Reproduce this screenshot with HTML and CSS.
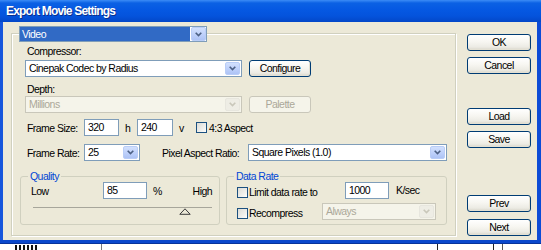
FILE: index.html
```html
<!DOCTYPE html>
<html>
<head>
<meta charset="utf-8">
<title>Export Movie Settings</title>
<link rel="stylesheet" href="styles.css">
</head>
<body>
<div class="window">
  <div class="titlebar"><span class="title">Export Movie Settings</span></div>
  <div class="client">
    <div class="panel">
      <div class="select select-head">
        <span class="select-value">Video</span>
        <span class="arrow"><svg width="7" height="5" viewBox="0 0 7 5"><path d="M0.7 0.7 L3.5 3.6 L6.3 0.7" fill="none" stroke="#4d6185" stroke-width="1.6"/></svg></span>
      </div>
      <div class="label">Compressor:</div>
      <div class="row">
        <div class="select w-comp">
          <span class="select-value">Cinepak Codec by Radius</span>
          <span class="arrow"><svg width="7" height="5" viewBox="0 0 7 5"><path d="M0.7 0.7 L3.5 3.6 L6.3 0.7" fill="none" stroke="#4d6185" stroke-width="1.6"/></svg></span>
        </div>
        <button class="btn btn-side">Configure</button>
      </div>
      <div class="label label-depth">Depth:</div>
      <div class="row row-depth">
        <div class="select w-comp disabled">
          <span class="select-value">Millions</span>
          <span class="arrow"><svg width="7" height="5" viewBox="0 0 7 5"><path d="M0.7 0.7 L3.5 3.6 L6.3 0.7" fill="none" stroke="#c9c7ba" stroke-width="1.6"/></svg></span>
        </div>
        <button class="btn btn-side" disabled>Palette</button>
      </div>
      <div class="row row-size">
        <span class="field-label">Frame Size:</span>
        <span class="input w-320">320</span>
        <span class="unit unit-h">h</span>
        <span class="input w-240">240</span>
        <span class="unit unit-v">v</span>
        <span class="check"></span>
        <span class="check-label">4:3 Aspect</span>
      </div>
      <div class="row row-rate">
        <span class="field-label">Frame Rate:</span>
        <div class="select w-rate">
          <span class="select-value">25</span>
          <span class="arrow"><svg width="7" height="5" viewBox="0 0 7 5"><path d="M0.7 0.7 L3.5 3.6 L6.3 0.7" fill="none" stroke="#4d6185" stroke-width="1.6"/></svg></span>
        </div>
        <span class="par-label">Pixel Aspect Ratio:</span>
        <div class="select w-par">
          <span class="select-value">Square Pixels (1.0)</span>
          <span class="arrow"><svg width="7" height="5" viewBox="0 0 7 5"><path d="M0.7 0.7 L3.5 3.6 L6.3 0.7" fill="none" stroke="#4d6185" stroke-width="1.6"/></svg></span>
        </div>
      </div>
      <div class="groups">
        <div class="group g-quality">
          <div class="legend">Quality</div>
          <div class="q-row">
            <span class="q-low">Low</span>
            <span class="input w-85">85</span>
            <span class="q-pct">%</span>
            <span class="q-high">High</span>
          </div>
          <div class="slider">
            <div class="thumb" style="margin-left: calc(85% - 6px)"><svg width="12" height="7" viewBox="0 0 12 7"><path d="M6 0.8 L11.2 6.3 L0.8 6.3 Z" fill="#ece9d8" stroke="#3c3c3c" stroke-width="1"/></svg></div>
          </div>
        </div>
        <div class="group g-data">
          <div class="legend">Data Rate</div>
          <div class="d-row">
            <span class="check"></span>
            <span class="d-label d-label-limit">Limit data rate to</span>
            <span class="input w-1000">1000</span>
            <span class="d-unit">K/sec</span>
          </div>
          <div class="d-row d-row2">
            <span class="check"></span>
            <span class="d-label d-label-rec">Recompress</span>
            <div class="select w-always disabled">
              <span class="select-value">Always</span>
              <span class="arrow"><svg width="7" height="5" viewBox="0 0 7 5"><path d="M0.7 0.7 L3.5 3.6 L6.3 0.7" fill="none" stroke="#c9c7ba" stroke-width="1.6"/></svg></span>
            </div>
          </div>
        </div>
      </div>
    </div>
    <div class="side">
      <button class="btn">OK</button>
      <button class="btn b-cancel">Cancel</button>
      <button class="btn b-load">Load</button>
      <button class="btn b-save">Save</button>
      <button class="btn b-prev">Prev</button>
      <button class="btn b-next">Next</button>
    </div>
  </div>
  <div class="frame-bottom"></div>
  <div class="taskbar">
    <span class="tb-marks"><i></i><i></i><i></i><i></i><i></i><i></i></span>
    <span class="tb-line tb-l1"></span>
    <span class="tb-line tb-l2"></span>
    <span class="tb-line tb-l3"></span>
    <span class="tb-line tb-l4"></span>
  </div>
</div>
</body>
</html>
```

FILE: styles.css
```css
* { box-sizing: border-box; }
html, body { margin: 0; padding: 0; }
body {
  width: 541px;
  height: 250px;
  overflow: hidden;
  background: #ffffff;
  font-family: "Liberation Sans", Arial, sans-serif;
  font-size: 10.5px;
  letter-spacing: -0.55px;
  color: #000;
}
.window { width: 541px; }

.titlebar {
  height: 22px;
  display: flex;
  align-items: center;
  padding-left: 6px;
  background: linear-gradient(180deg, #3c8cf6 0px, #0b61e4 3px, #0558e2 10px, #0453dc 16px, #0347c8 22px);
}
.title {
  color: #fff;
  font-weight: bold;
  font-size: 12px;
  letter-spacing: -0.8px;
  text-shadow: 1px 1px 0 #0b2f8c;
  margin-top: -1px;
}

.client {
  display: flex;
  height: 218px;
  background: #ece9d8;
  border-left: 3px solid #1656dc;
  border-right: 4px solid #0c4bd6;
}

.panel {
  margin: 11px 0 0 8px;
  width: 445px;
  height: 203px;
  border: 1px solid #d0d0bf;
  box-shadow: inset 1px 1px 0 #ffffff, 1px 1px 0 #ffffff;
  padding-left: 8px;
}

/* selects */
.select {
  display: flex;
  height: 17px;
  border: 1px solid #7f9db9;
  background: #fff;
}
.select-value {
  flex: 1;
  padding-left: 3px;
  line-height: 15px;
  white-space: nowrap;
  overflow: hidden;
}
.arrow {
  width: 15px;
  margin: 1px;
  border: 1px solid #b9cdf7;
  border-radius: 2px;
  background: linear-gradient(180deg, #d2e0fd 0%, #bccffa 60%, #adc3f5 100%);
  display: flex;
  align-items: center;
  justify-content: center;
}
.select.disabled { border-color: #c9c7ba; background: #f5f4ea; color: #aca899; }
.select.disabled .arrow { border-color: #e7e6de; background: #eeede5; }

.select-head {
  margin-top: -8px;
  margin-left: -1px;
  width: 188px;
  height: 16px;
}
.select-head .select-value {
  background: #316ac5;
  color: #fff;
  line-height: 14px;
  padding-left: 2px;
  margin: 0;
}
.select-head .arrow { margin: 0 0 0 1px; }

.label {
  margin-top: 3px;
  padding-left: 7px;
  line-height: 13px;
}
.label-depth { margin-top: 6px; color: #000; }

.row {
  display: flex;
  align-items: center;
  height: 17px;
  margin-top: 2px;
  padding-left: 5px;
}
.row-depth { margin-top: 0; }
.w-comp { width: 217px; }

.btn {
  height: 17px;
  width: 64px;
  padding: 0;
  border: 1px solid #003c74;
  border-radius: 3px;
  background: linear-gradient(180deg, #ffffff 0%, #f7f6f1 45%, #ecebe4 80%, #d8d5c9 100%);
  box-shadow: inset -1px -1px 0 #e3e0d3;
  font: inherit;
  letter-spacing: inherit;
  color: #000;
  display: block;
  line-height: 15px;
}
.btn:disabled { border-color: #c9c7ba; color: #aca899; background: #f5f4ea; box-shadow: none; }
.btn-side { width: 62px; margin-left: 7px; }

.row-size { margin-top: 6px; }
.field-label { width: 59px; padding-left: 2px; flex-shrink: 0; }
.input {
  height: 17px;
  border: 1px solid #7f9db9;
  background: #fff;
  padding-left: 3px;
  line-height: 15px;
}
.w-320 { width: 35px; }
.w-240 { width: 36px; }
.unit-h { margin-left: 6px; width: 12px; }
.unit-v { margin-left: 6px; width: 17px; }
.check {
  width: 11px;
  height: 11px;
  border: 1px solid #1c5180;
  background: linear-gradient(135deg, #dcdcd7 0%, #f2f2ef 70%, #ffffff 100%);
  flex-shrink: 0;
}
.check-label { margin-left: 2px; }

.row-rate { margin-top: 8px; }
.w-rate { width: 56px; }
.par-label { margin-left: 22px; width: 86px; }
.w-par { width: 199px; }

.groups {
  display: flex;
  margin-top: 15px;
  gap: 6px;
}
.group {
  height: 49px;
  border: 1px solid #d0d0bf;
  border-radius: 3px;
}
.g-quality { width: 200px; }
.g-data { width: 221px; }
.legend {
  margin-top: -7px;
  margin-left: 7px;
  padding: 0 2px;
  width: fit-content;
  background: #ece9d8;
  color: #0046d5;
  line-height: 13px;
}

.q-row {
  display: flex;
  align-items: center;
  height: 17px;
  margin-top: -1px;
  padding-left: 10px;
  padding-right: 7px;
}
.q-low { width: 72px; }
.w-85 { width: 44px; }
.q-pct { margin-left: 6px; }
.q-high { margin-left: auto; }
.slider {
  margin: 8px 7px 0 12px;
  border-top: 1px solid #a7a69b;
}
.thumb { width: 12px; height: 7px; }
.thumb svg { display: block; }

.d-row {
  display: flex;
  align-items: flex-end;
  height: 17px;
  margin-top: -1px;
  padding-left: 10px;
}
.d-row .check { margin-bottom: 1px; }
.d-label { margin-left: 1px; line-height: 13px; }
.d-label-limit { width: 96px; }
.w-1000 { width: 44px; align-self: stretch; }
.d-unit { margin-left: 7px; line-height: 13px; margin-bottom: 2px; }
.d-row2 { margin-top: 4px; }
.d-label-rec { width: 73px; }
.w-always { width: 114px; }

.side {
  margin: 12px 0 0 11px;
  display: flex;
  flex-direction: column;
}
.b-cancel { margin-top: 6px; }
.b-load { margin-top: 34px; }
.b-save { margin-top: 6px; }
.b-prev { margin-top: 47px; }
.b-next { margin-top: 7px; }

.frame-bottom {
  height: 4px;
  background: #0a48cc;
  border-bottom: 1px solid #07339a;
}
.taskbar {
  height: 6px;
  overflow: hidden;
  display: flex;
  background: #fff;
}
.tb-marks {
  margin-left: 15px;
  width: 86px;
  display: flex;
  gap: 2px;
  padding-top: 1px;
}
.tb-marks i {
  display: block;
  width: 2px;
  height: 5px;
  background: #111;
}
.tb-line { width: 1px; height: 6px; background: #7a7a7a; }
.tb-l2 { margin-left: 335px; background: #222; }
.tb-l3 { margin-left: 55px; background: #222; }
.tb-l4 { margin-left: 8px; background: #555; }
```
